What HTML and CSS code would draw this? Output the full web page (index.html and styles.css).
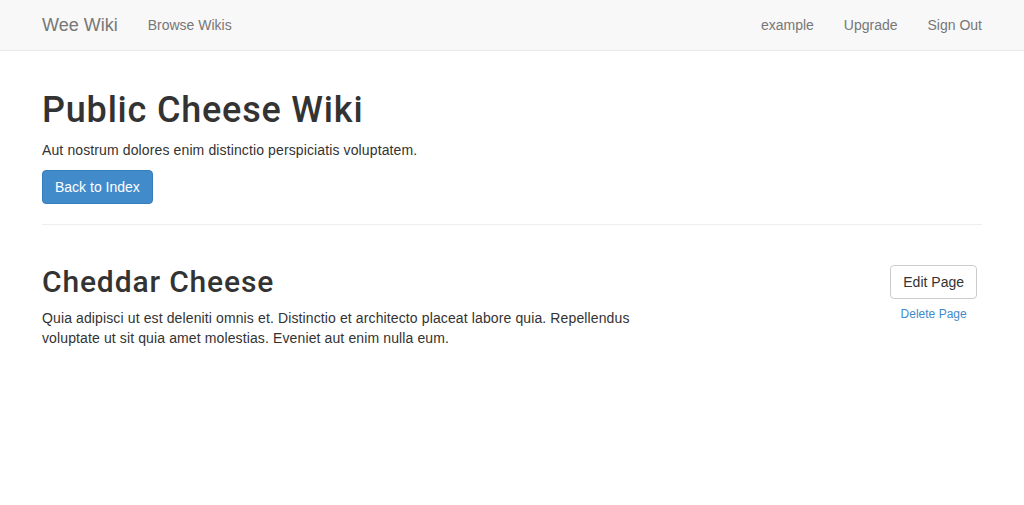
FILE: index.html
```html
<!DOCTYPE html>
<html>
<head>
<meta charset="utf-8">
<title>Public Cheese Wiki</title>
<link rel="stylesheet" href="styles.css">
</head>
<body>
<nav class="navbar">
  <div class="container nav-inner">
    <div class="nav-left">
      <a class="brand" href="#">Wee Wiki</a>
      <a class="nav-link" href="#">Browse Wikis</a>
    </div>
    <div class="nav-right">
      <a class="nav-link" href="#">example</a>
      <a class="nav-link" href="#">Upgrade</a>
      <a class="nav-link" href="#">Sign Out</a>
    </div>
  </div>
</nav>
<main class="container content">
  <h1 class="title">Public Cheese Wiki</h1>
  <p class="lead-text">Aut nostrum dolores enim distinctio perspiciatis voluptatem.</p>
  <a class="btn btn-primary" href="#">Back to Index</a>
  <hr class="divider">
  <section class="page-row">
    <div class="page-main">
      <h2 class="page-title">Cheddar Cheese</h2>
      <p class="page-body">Quia adipisci ut est deleniti omnis et. Distinctio et architecto placeat labore quia. Repellendus voluptate ut sit quia amet molestias. Eveniet aut enim nulla eum.</p>
    </div>
    <div class="page-actions">
      <a class="btn btn-default" href="#">Edit Page</a>
      <a class="delete-link" href="#">Delete Page</a>
    </div>
  </section>
</main>
</body>
</html>
```

FILE: styles.css
```css
* { box-sizing: border-box; }
html, body { margin: 0; padding: 0; }
body {
  font-family: "Liberation Sans", Arial, sans-serif;
  font-size: 14px;
  line-height: 20px;
  color: #333;
  background: #fff;
}
a { text-decoration: none; }
.container {
  width: 970px;
  margin: 0 auto;
  padding: 0 15px;
}
.content { display: flow-root; }
.navbar {
  height: 51px;
  background: #f8f8f8;
  border-bottom: 1px solid #e7e7e7;
  margin-bottom: 20px;
}
.nav-inner {
  display: flex;
  justify-content: space-between;
  height: 50px;
}
.nav-left, .nav-right {
  display: flex;
  align-items: center;
  height: 50px;
}
.nav-left { margin-left: -15px; }
.nav-right { margin-right: -15px; }
.brand {
  font-size: 18px;
  line-height: 20px;
  padding: 15px;
  color: #777;
}
.nav-link {
  font-size: 14px;
  line-height: 20px;
  padding: 15px;
  color: #777;
}
.title, .page-title {
  font-family: Roboto, "Liberation Sans", sans-serif;
  font-weight: 500;
  color: #333;
}
.title {
  font-size: 36px;
  line-height: 39px;
  letter-spacing: 0.8px;
  margin: 20px 0 10px;
}
.lead-text, .page-body { letter-spacing: 0.12px; }
.lead-text { margin: 0 0 10px; }
.btn {
  display: inline-block;
  padding: 6px 12px;
  font-size: 14px;
  line-height: 20px;
  border: 1px solid transparent;
  border-radius: 4px;
  text-align: center;
}
.btn-primary {
  background: #428bca;
  border-color: #357ebd;
  color: #fff;
}
.btn-default {
  background: #fff;
  border-color: #ccc;
  color: #333;
}
.divider {
  border: 0;
  border-top: 1px solid #eee;
  margin: 20px 0;
}
.page-row {
  display: flex;
  justify-content: space-between;
  align-items: flex-start;
}
.page-main { width: 616px; }
.page-title {
  font-size: 30px;
  line-height: 33px;
  letter-spacing: 0.85px;
  margin: 20px 0 10px;
}
.page-body { margin: 0 0 10px; }
.page-actions {
  display: flex;
  flex-direction: column;
  align-items: center;
  margin-top: 20px;
  margin-right: 5px;
}
.delete-link {
  font-size: 12px;
  line-height: 17px;
  margin-top: 7px;
  color: #428bca;
}
```
